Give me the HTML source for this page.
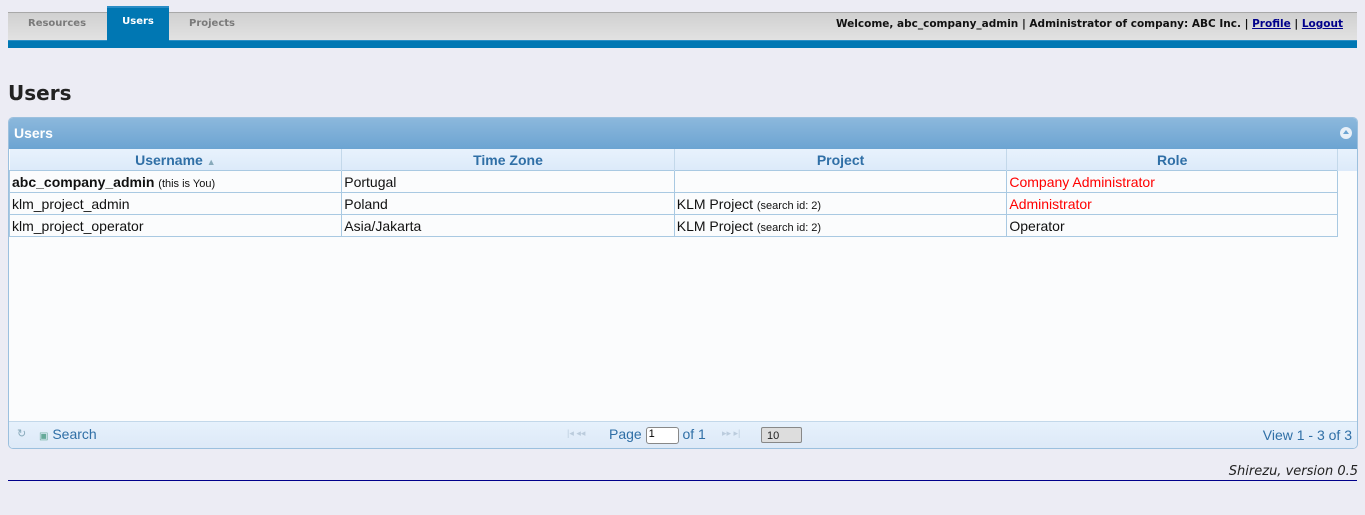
<!DOCTYPE html>
<html><head><meta charset="utf-8"><style>
body{margin:0;background:#ececf4;width:1365px;height:515px;position:relative;font-family:"Liberation Sans",sans-serif;overflow:hidden}
.abs{position:absolute}
.nav{left:8px;top:12px;width:1349px;height:28px;border-top:1px solid #a8a8a8;background:linear-gradient(#d0d0d0,#e2e2e2);box-sizing:border-box}
.blue{left:8px;top:40px;width:1349px;height:8px;background:#0077b3;border-top:1px solid #2c8fc4;box-sizing:border-box}
.tab{font:bold 10px "DejaVu Sans",sans-serif;color:#7a7a7a;top:18px}
.utab{left:107px;top:6px;width:62px;height:35px;background:#0077b3;border-top:2px solid #2a8dc6;box-sizing:border-box;color:#fff;font:bold 10px "DejaVu Sans",sans-serif;text-align:center;padding-top:8px}
.welcome{right:22px;top:18px;font:bold 10.5px "DejaVu Sans",sans-serif;color:#111}
.welcome a{color:#00008b}
h1{position:absolute;left:8px;top:81px;margin:0;font:bold 20px "DejaVu Sans",sans-serif;color:#222}
.panel{left:8px;top:117px;width:1350px;height:332px;border:1px solid #9cc0de;border-radius:5px;box-sizing:border-box;background:#fbfcfd;overflow:hidden}
.ph{left:0;top:0;width:100%;height:31px;background:linear-gradient(#8cb8dc,#6ca4d2);color:#fff;font:bold 14px "Liberation Sans",sans-serif}
table{position:absolute;left:0;top:31px;border-collapse:collapse;font-size:14px}
th{height:21px;background:linear-gradient(#e8f2fc,#dceafa);color:#2f6fa6;font-size:14px;border-right:1px solid #c3d8ea;padding:0}
td{height:21px;border:1px solid #a9c9e2;padding:0 2px;color:#111;white-space:nowrap}
.red{color:#f00}
.ft{left:0;bottom:0;width:100%;height:26px;background:linear-gradient(#e6f1fc,#dde9f7);border-top:1px solid #c3d8ea;color:#2f6fa6;font-size:14px}
</style></head><body>
<div class="abs nav"></div>
<div class="abs blue"></div>
<div class="abs tab" style="left:28px">Resources</div>
<div class="abs utab">Users</div>
<div class="abs tab" style="left:189px">Projects</div>
<div class="abs welcome">Welcome, abc_company_admin | Administrator of company: ABC Inc. | <a href="#">Profile</a> | <a href="#">Logout</a></div>
<h1>Users</h1>
<div class="abs panel">
 <div class="abs ph"><span class="abs" style="left:5px;top:7px">Users</span>
  <span class="abs" style="right:5px;top:9px;width:12px;height:12px;border-radius:6px;background:#e8f0f8"><span class="abs" style="left:3px;top:3px;width:0;height:0;border-left:3px solid transparent;border-right:3px solid transparent;border-bottom:4px solid #6ca4d2"></span></span></div>
 <table>
  <tr><th style="width:332px">Username <span style="font-size:9px;color:#8ab">&#9650;</span></th><th style="width:332px">Time Zone</th><th style="width:332px">Project</th><th style="width:330px">Role</th><th style="width:18px;border-right:none"></th></tr>
  <tr><td><b>abc_company_admin</b> <span style="font-size:11px">(this is You)</span></td><td>Portugal</td><td></td><td class="red">Company Administrator</td></tr>
  <tr><td>klm_project_admin</td><td>Poland</td><td>KLM Project <span style="font-size:11px">(search id: 2)</span></td><td class="red">Administrator</td></tr>
  <tr><td>klm_project_operator</td><td>Asia/Jakarta</td><td>KLM Project <span style="font-size:11px">(search id: 2)</span></td><td>Operator</td></tr>
 </table>
 <div class="abs ft">
  <span class="abs" style="left:8px;top:5px;font-size:11px;color:#8ab">&#8635;</span>
  <span class="abs" style="left:30px;top:4px"><span style="font-size:10px;color:#6a9">&#9635;</span> Search</span>
  <span class="abs" style="left:558px;top:6px;font-size:9px;color:#bcd">|◂ ◂◂</span>
  <span class="abs" style="left:600px;top:4px">Page <span style="display:inline-block;width:33px;height:17px;border:1px solid #888;border-radius:3px;background:#fff;color:#000;font-size:11px;vertical-align:middle;box-sizing:border-box;padding-left:2px">1</span> of 1</span>
  <span class="abs" style="left:713px;top:6px;font-size:9px;color:#bcd">▸▸ ▸|</span>
  <span class="abs" style="left:752px;top:5px;width:41px;height:16px;border:1px solid #888;border-radius:2px;background:#ddd;font-size:11px;color:#222;box-sizing:border-box;padding:2px 0 0 5px">10</span>
  <span class="abs" style="right:5px;top:5px">View 1 - 3 of 3</span>
 </div>
</div>
<div class="abs" style="right:7px;top:464px;font:italic 13px 'DejaVu Sans',sans-serif;color:#222">Shirezu, version 0.5</div>
<div class="abs" style="left:8px;top:480px;width:1349px;height:1px;background:#00008b"></div>
</body></html>
